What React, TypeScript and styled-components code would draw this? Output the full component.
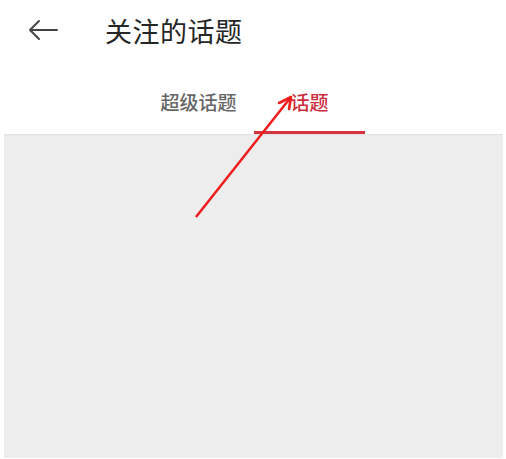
import React from "react";
import styled, { createGlobalStyle } from "styled-components";

const Global = createGlobalStyle`
  html, body { margin: 0; padding: 0; background: #ffffff; }
  body { font-family: "Noto Sans CJK SC", "Noto Sans", sans-serif; }
`;

const Page = styled.div`
  position: relative;
  width: 506px;
  height: 459px;
  overflow: hidden;
  display: flex;
  flex-direction: column;
  background: #fff;
`;

const Header = styled.div`
  display: flex;
  align-items: center;
  height: 60px;
  padding-left: 28px;
`;

const BackButton = styled.div`
  width: 30px;
  height: 22px;
  display: flex;
  align-items: center;
  margin-right: 47px;
`;

const Title = styled.div`
  font-size: 27px;
  color: #262626;
  letter-spacing: 0.5px;
  line-height: 1;
`;

const Tabs = styled.div`
  display: flex;
  padding-left: 143px;
  height: 75px;
  margin-top: -1px;
`;

const Tab = styled.div<{ $active?: boolean }>`
  width: 111px;
  display: flex;
  justify-content: center;
  padding-top: 31px;
  box-sizing: border-box;
  font-size: 19px;
  font-weight: 500;
  line-height: 1.3;
  color: ${(p) => (p.$active ? "#cc2e3c" : "#666666")};
  border-bottom: 3px solid ${(p) => (p.$active ? "#d8323f" : "transparent")};
`;

const Content = styled.div`
  flex: 1;
  margin: 0 3px 1px 4px;
  background: #ededed;
  box-shadow: inset 0 2px 2px -1px rgba(0, 0, 0, 0.06);
`;

const Annotation = styled.svg`
  position: absolute;
  left: 0;
  top: 0;
  pointer-events: none;
`;

export default function App() {
  return (
    <>
      <Global />
      <Page>
        <Header>
          <BackButton>
            <svg width="30" height="22" viewBox="0 0 30 22">
              <path
                d="M29 11 H2 M11 2 L2 11 L11 20"
                fill="none"
                stroke="#444"
                strokeWidth="2"
                strokeLinecap="round"
                strokeLinejoin="round"
              />
            </svg>
          </BackButton>
          <Title>关注的话题</Title>
        </Header>
        <Tabs>
          <Tab>超级话题</Tab>
          <Tab $active>话题</Tab>
        </Tabs>
        <Content />
        <Annotation width="506" height="459" viewBox="0 0 506 459">
          <path d="M196 217 L291 97" stroke="#ee1c1c" strokeWidth="2.5" fill="none" />
          <path d="M291 97 L279 103 M291 97 L289 109" stroke="#ee1c1c" strokeWidth="2.6" fill="none" strokeLinecap="round" />
        </Annotation>
      </Page>
    </>
  );
}
